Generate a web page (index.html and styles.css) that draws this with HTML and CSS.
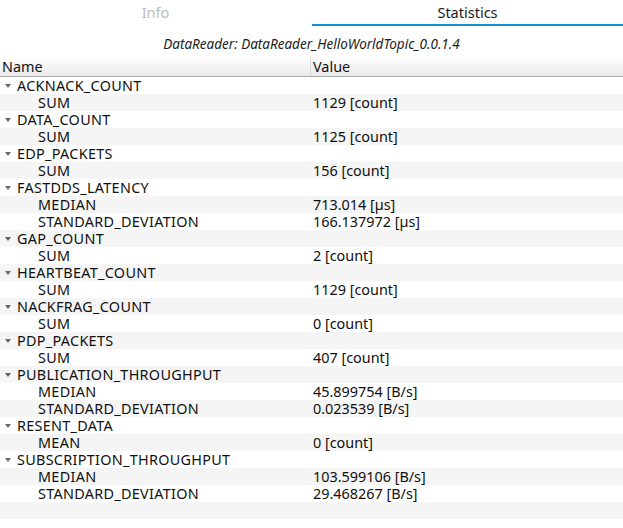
FILE: index.html
```html
<!DOCTYPE html>
<html lang="en">
<head>
    <meta charset="UTF-8">
    <title>Statistics</title>
    <link rel="stylesheet" href="styles.css">
</head>
<body>
<div class="tabs">
    <div class="tab">Info</div>
    <div class="tab active">Statistics</div>
</div>
<div class="entity-title">DataReader: DataReader_HelloWorldTopic_0.0.1.4</div>
<div class="tree">
    <div class="tree-header">
        <div class="col-name">Name</div>
        <div class="col-value">Value</div>
    </div>
    <div class="tree-body">
        <div class="row parent"><div class="col-name"><span class="arrow"></span>ACKNACK_COUNT</div><div class="col-value"></div></div>
        <div class="row child"><div class="col-name">SUM</div><div class="col-value">1129 [count]</div></div>
        <div class="row parent"><div class="col-name"><span class="arrow"></span>DATA_COUNT</div><div class="col-value"></div></div>
        <div class="row child"><div class="col-name">SUM</div><div class="col-value">1125 [count]</div></div>
        <div class="row parent"><div class="col-name"><span class="arrow"></span>EDP_PACKETS</div><div class="col-value"></div></div>
        <div class="row child"><div class="col-name">SUM</div><div class="col-value">156 [count]</div></div>
        <div class="row parent"><div class="col-name"><span class="arrow"></span>FASTDDS_LATENCY</div><div class="col-value"></div></div>
        <div class="row child"><div class="col-name">MEDIAN</div><div class="col-value">713.014 [µs]</div></div>
        <div class="row child"><div class="col-name">STANDARD_DEVIATION</div><div class="col-value">166.137972 [µs]</div></div>
        <div class="row parent"><div class="col-name"><span class="arrow"></span>GAP_COUNT</div><div class="col-value"></div></div>
        <div class="row child"><div class="col-name">SUM</div><div class="col-value">2 [count]</div></div>
        <div class="row parent"><div class="col-name"><span class="arrow"></span>HEARTBEAT_COUNT</div><div class="col-value"></div></div>
        <div class="row child"><div class="col-name">SUM</div><div class="col-value">1129 [count]</div></div>
        <div class="row parent"><div class="col-name"><span class="arrow"></span>NACKFRAG_COUNT</div><div class="col-value"></div></div>
        <div class="row child"><div class="col-name">SUM</div><div class="col-value">0 [count]</div></div>
        <div class="row parent"><div class="col-name"><span class="arrow"></span>PDP_PACKETS</div><div class="col-value"></div></div>
        <div class="row child"><div class="col-name">SUM</div><div class="col-value">407 [count]</div></div>
        <div class="row parent"><div class="col-name"><span class="arrow"></span>PUBLICATION_THROUGHPUT</div><div class="col-value"></div></div>
        <div class="row child"><div class="col-name">MEDIAN</div><div class="col-value">45.899754 [B/s]</div></div>
        <div class="row child"><div class="col-name">STANDARD_DEVIATION</div><div class="col-value">0.023539 [B/s]</div></div>
        <div class="row parent"><div class="col-name"><span class="arrow"></span>RESENT_DATA</div><div class="col-value"></div></div>
        <div class="row child"><div class="col-name">MEAN</div><div class="col-value">0 [count]</div></div>
        <div class="row parent"><div class="col-name"><span class="arrow"></span>SUBSCRIPTION_THROUGHPUT</div><div class="col-value"></div></div>
        <div class="row child"><div class="col-name">MEDIAN</div><div class="col-value">103.599106 [B/s]</div></div>
        <div class="row child"><div class="col-name">STANDARD_DEVIATION</div><div class="col-value">29.468267 [B/s]</div></div>
        <div class="row"></div>
        <div class="row"></div>
    </div>
</div>
</body>
</html>
```

FILE: styles.css
```css
body { margin: 0; background: #fff; color: #101010; font-family: "Noto Sans", "DejaVu Sans", sans-serif; font-size: 14.4px; overflow: hidden; }

.tabs { display: flex; height: 26px; }
.tab { flex: 1; text-align: center; line-height: 25px; color: #bdbdbd; font-size: 14.5px; border-bottom: 2px solid transparent; }
.tab.active { color: #1a1a1a; border-bottom-color: #1592d3; }
.tab:first-child { margin-right: 1px; }

.entity-title { text-align: center; font-style: italic; font-size: 13.5px; height: 31px; line-height: 36px; color: #222; }

.tree-header { display: flex; height: 19px; line-height: 19px; background: linear-gradient(#ffffff, #e9e9e9); border-bottom: 1px solid #a8a8a8; }
.tree-header .col-name { width: 311px; padding-left: 2px; box-sizing: border-box; border-right: 1px solid #d6d6d6; }
.tree-header .col-value { padding-left: 2px; }

.row { display: flex; height: 17px; line-height: 17px; }
.row:nth-child(even) { background: #f5f5f5; }
.row .col-name { width: 312px; box-sizing: border-box; display: flex; align-items: center; white-space: nowrap; letter-spacing: 0.3px; }
.row .col-value { padding-left: 1px; white-space: nowrap; }
.parent .col-name { padding-left: 5px; }
.child .col-name { padding-left: 38px; }

.arrow { flex: none; width: 0; height: 0; border-left: 3.5px solid transparent; border-right: 3.5px solid transparent; border-top: 4px solid #666; margin-right: 6px; }
```
